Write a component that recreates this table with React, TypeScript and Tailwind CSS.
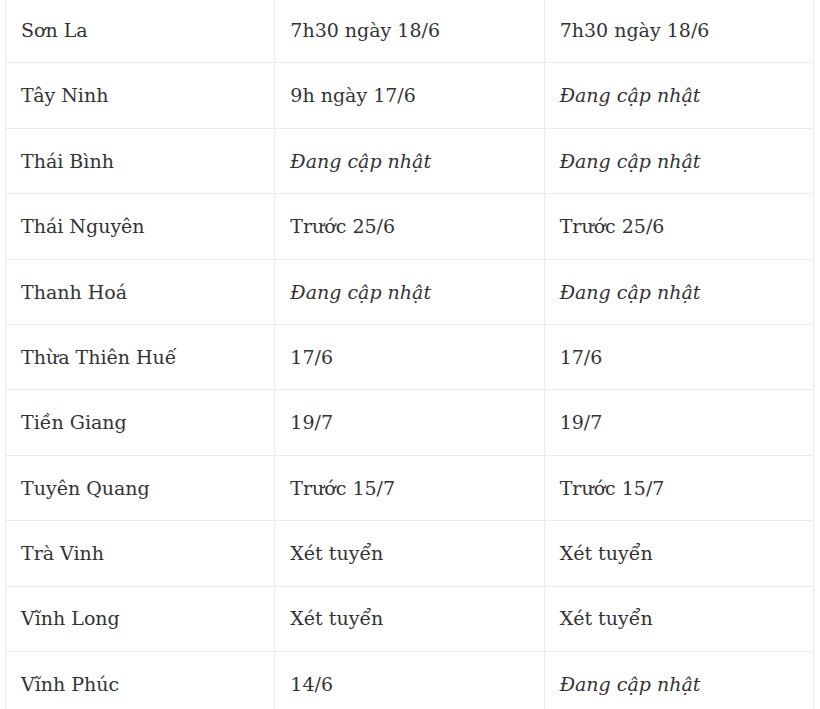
const rows: [string, string, string][] = [
  ["Sơn La", "7h30 ngày 18/6", "7h30 ngày 18/6"],
  ["Tây Ninh", "9h ngày 17/6", "*Đang cập nhật"],
  ["Thái Bình", "*Đang cập nhật", "*Đang cập nhật"],
  ["Thái Nguyên", "Trước 25/6", "Trước 25/6"],
  ["Thanh Hoá", "*Đang cập nhật", "*Đang cập nhật"],
  ["Thừa Thiên Huế", "17/6", "17/6"],
  ["Tiền Giang", "19/7", "19/7"],
  ["Tuyên Quang", "Trước 15/7", "Trước 15/7"],
  ["Trà Vinh", "Xét tuyển", "Xét tuyển"],
  ["Vĩnh Long", "Xét tuyển", "Xét tuyển"],
  ["Vĩnh Phúc", "14/6", "*Đang cập nhật"],
];

const Cell = ({ text }: { text: string }) => {
  const italic = text.startsWith("*");
  return (
    <td className="border border-[#ececec] px-[15px] h-[65.4px] align-middle">
      {italic ? <em>{text.slice(1)}</em> : text}
    </td>
  );
};

export default function App() {
  return (
    <div className="w-[820px] h-[709px] overflow-hidden bg-white pl-[5px] pr-[6px]">
      <table
        className="w-full table-fixed border-collapse -mt-[3px] text-[19px] text-[#333]"
        style={{ fontFamily: '"DejaVu Serif", serif' }}
      >
        <tbody>
          {rows.map((r) => (
            <tr key={r[0]}>
              {r.map((c, i) => (
                <Cell key={i} text={c} />
              ))}
            </tr>
          ))}
        </tbody>
      </table>
    </div>
  );
}
